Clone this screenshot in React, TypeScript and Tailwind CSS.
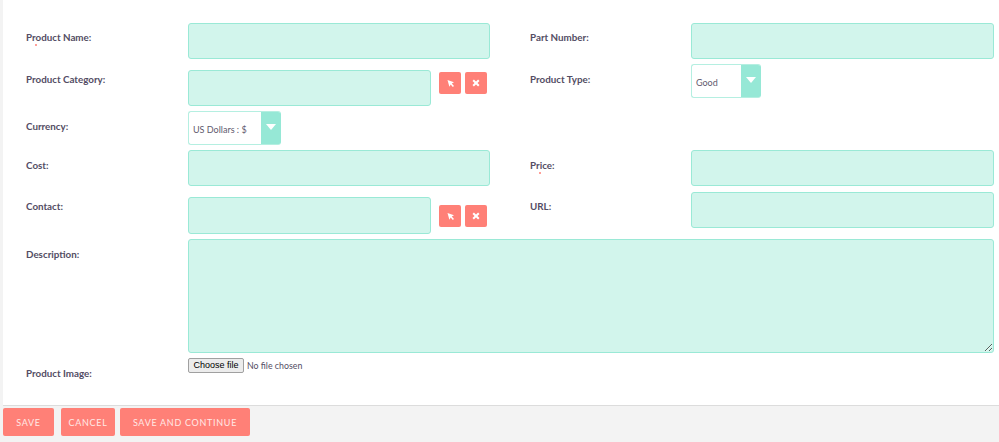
const labelCls = "text-[9.8px] font-bold text-[#534d64] leading-[14px]"

function Label({text, top, required, width = "w-[162px]"}: {text: string, top: string, required?: boolean, width?: string}) {
    return (
        <div className={`shrink-0 ${width} ${top}`}>
            <div className={labelCls}>{text}</div>
            {required && <div className="ml-[9px] h-[2px] w-[2px] rounded-full bg-[#ff8077]"/>}
        </div>
    )
}

function TextBox({className}: {className: string}) {
    return <div className={`rounded-[3px] border border-[#9ae9d6] bg-[#d2f5ec] ${className}`}/>
}

function PickerButtons() {
    return (
        <div className="ml-[8px] mt-[8px] flex gap-[4px]">
            <button className="flex h-[22px] w-[22px] items-center justify-center rounded-[2px] bg-[#ff8077]">
                <svg width="9" height="9" viewBox="0 0 9 9" fill="white">
                    <path d="M1.5 1 L8 3.2 L5.8 4.6 L8 7 L6.8 8 L4.7 5.6 L3.4 7.8 Z"/>
                </svg>
            </button>
            <button className="flex h-[22px] w-[22px] items-center justify-center rounded-[2px] bg-[#ff8077]">
                <svg width="8" height="8" viewBox="0 0 8 8" fill="none" stroke="white" strokeWidth="2">
                    <path d="M1.2 1.2 L6.8 6.8 M6.8 1.2 L1.2 6.8"/>
                </svg>
            </button>
        </div>
    )
}

function SelectBox({value, width}: {value: string, width: string}) {
    return (
        <div className={`flex h-[34px] overflow-hidden rounded-[3px] border border-r-0 border-[#b5efe1] bg-white ${width}`}>
            <div className="flex flex-1 items-center pl-[4px] pt-[3px] text-[9px] text-[#5f5a6e]">{value}</div>
            <div className="flex w-[20px] items-center justify-center bg-[#96e8d6] pb-[3px]">
                <div className="h-0 w-0 border-x-[5px] border-t-[6px] border-x-transparent border-t-white"/>
            </div>
        </div>
    )
}

export default function App() {
    const rightLabel = "w-[161px]"
    return (
        <div className="flex h-[442px] w-[999px] flex-col overflow-hidden bg-[#f3f3f3] font-['Lato','Noto_Sans',sans-serif]">
            <div className="ml-[3px] h-[406px] shrink-0 border-b border-[#dcdcdc] bg-white pl-[23px] pt-[23px]">
                <div className="flex h-[41px]">
                    <Label text="Product Name:" top="pt-[7px]" required/>
                    <TextBox className="h-[36px] w-[302px]"/>
                    <div className="w-[40px]"/>
                    <Label text="Part Number:" top="pt-[7px]" width={rightLabel}/>
                    <TextBox className="h-[36px] w-[303px]"/>
                </div>
                <div className="flex h-[47px]">
                    <Label text="Product Category:" top="pt-[8px]"/>
                    <div className="flex w-[302px]">
                        <TextBox className="mt-[6px] h-[36px] w-[243px]"/>
                        <PickerButtons/>
                    </div>
                    <div className="w-[40px]"/>
                    <Label text="Product Type:" top="pt-[8px]" width={rightLabel}/>
                    <SelectBox value="Good" width="w-[70px]"/>
                </div>
                <div className="flex h-[39px]">
                    <Label text="Currency:" top="pt-[8px]"/>
                    <SelectBox value="US Dollars : $" width="w-[93px]"/>
                </div>
                <div className="flex h-[42px]">
                    <Label text="Cost:" top="pt-[8px]"/>
                    <TextBox className="h-[36px] w-[302px]"/>
                    <div className="w-[40px]"/>
                    <Label text="Price:" top="pt-[8px]" required width={rightLabel}/>
                    <TextBox className="h-[36px] w-[303px]"/>
                </div>
                <div className="flex h-[47px]">
                    <Label text="Contact:" top="pt-[7px]"/>
                    <div className="flex w-[302px]">
                        <TextBox className="mt-[5px] h-[37px] w-[243px]"/>
                        <div className="mt-[5px]"><PickerButtons/></div>
                    </div>
                    <div className="w-[40px]"/>
                    <Label text="URL:" top="pt-[7px]" width={rightLabel}/>
                    <TextBox className="h-[36px] w-[303px]"/>
                </div>
                <div className="flex h-[119px]">
                    <Label text="Description:" top="pt-[8px]"/>
                    <textarea className="h-[114px] w-[806px] rounded-[3px] border border-[#9ae9d6] bg-[#d2f5ec] outline-none"/>
                </div>
                <div className="flex">
                    <Label text="Product Image:" top="pt-[8px]"/>
                    <div className="flex h-[15px] items-center gap-[3px]">
                        <button className="h-[15px] w-[56px] rounded-[2px] border border-[#a0a0a0] bg-[#ececec] font-['Liberation_Sans'] text-[9px] leading-[13px] text-black">Choose file</button>
                        <span className="text-[8.8px] text-[#534d64]">No file chosen</span>
                    </div>
                </div>
            </div>
            <div className="ml-[3px] mt-[2px] flex">
                <button className="h-[28px] w-[51px] rounded-[2px] bg-[#ff8077] pt-[1px] text-[9px] tracking-[0.7px] text-[#ffe9e6]">SAVE</button>
                <button className="ml-[7px] h-[28px] w-[54px] rounded-[2px] bg-[#ff8077] pt-[1px] text-[9px] tracking-[0.7px] text-[#ffe9e6]">CANCEL</button>
                <button className="ml-[5px] h-[28px] w-[130px] rounded-[2px] bg-[#ff8077] pt-[1px] text-[9px] tracking-[0.7px] text-[#ffe9e6]">SAVE AND CONTINUE</button>
            </div>
        </div>
    )
}
